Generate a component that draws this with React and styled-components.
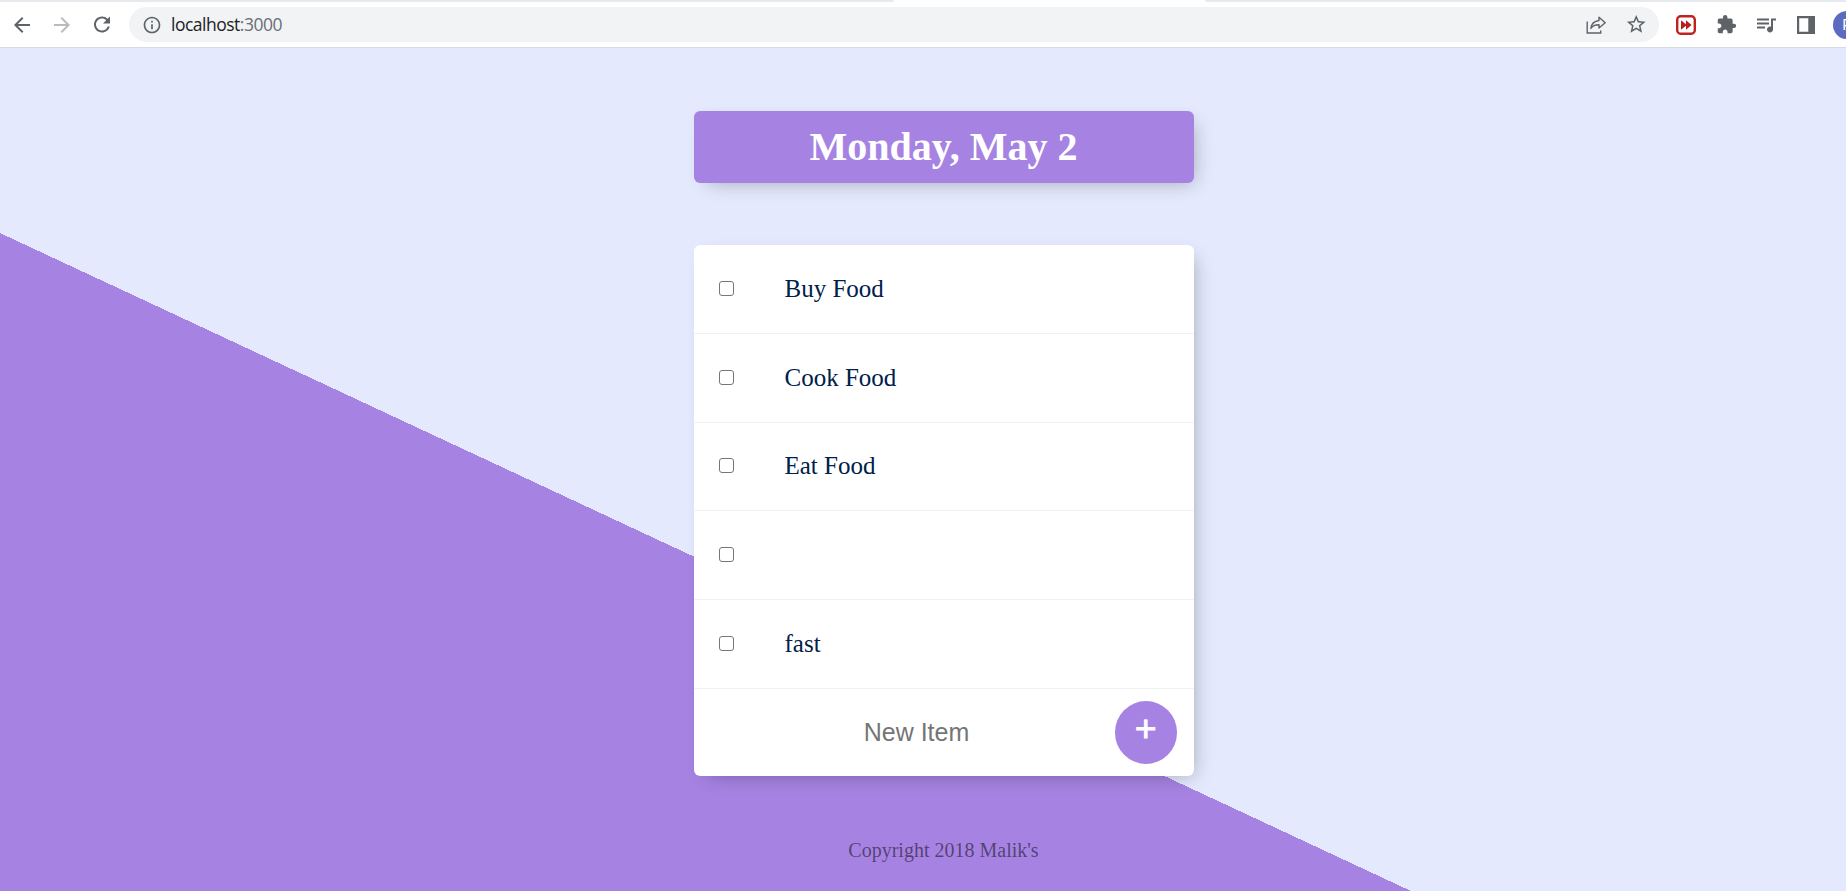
import React from "react";
import styled, { createGlobalStyle } from "styled-components";
import {
  MdArrowBack,
  MdArrowForward,
  MdRefresh,
  MdInfoOutline,
  MdStarBorder,
  MdExtension,
  MdQueueMusic,
} from "react-icons/md";

const GlobalStyle = createGlobalStyle`
  html, body { margin: 0; overflow: hidden; background: #e4e9fd; }
  *, *::before, *::after { box-sizing: border-box; }
`;

const Window = styled.div`
  width: 1887px;
  height: 891px;
  overflow: hidden;
  font-family: "Liberation Serif", "Times New Roman", serif;
`;

const TabStrip = styled.div`
  display: flex;
  justify-content: space-between;
  height: 2px;
  background: #fff;
`;

const InactiveTabs = styled.div`
  width: ${(p) => p.$width}px;
  background: #e6e9ed;
  border-radius: ${(p) => (p.$side === "left" ? "0 0 4px 0" : "0 0 0 4px")};
`;

const Toolbar = styled.header`
  display: flex;
  align-items: center;
  height: 46px;
  padding: 0 0 0 9.5px;
  background: #fff;
  border-bottom: 1px solid #d9dbde;
`;

const ToolButton = styled.span`
  display: flex;
  flex: none;
  width: 24px;
  justify-content: center;
  margin-right: ${(p) => p.$gap ?? 16}px;
  color: ${(p) => (p.$disabled ? "#b9bbbe" : "#5f6368")};
`;

const AddressBar = styled.div`
  display: flex;
  align-items: center;
  flex: none;
  width: 1530px;
  height: 35px;
  margin-right: 15px;
  padding: 0 10.5px 0 10.5px;
  border-radius: 18px;
  background: #f1f3f4;
`;

const Url = styled.span`
  flex: 1;
  margin-left: 7.5px;
  padding-bottom: 1.5px;
  font: 400 17.5px/24px "Open Sans", "Noto Sans", sans-serif;
  letter-spacing: -0.5px;
  color: #202124;
`;

const Port = styled.span`
  color: #6b6f74;
`;

const Avatar = styled.span`
  flex: none;
  width: 28px;
  height: 28px;
  border-radius: 50%;
  background: #5c6bc0;
  color: #fff;
  font: 400 15px/28px Roboto, sans-serif;
  text-align: center;
`;

const Page = styled.main`
  height: 1250px;
  padding-top: 63px;
  background-image: linear-gradient(25deg, #a683e3 50%, #e4e9fd 50%);
`;

const Box = styled.section`
  width: 500px;
  margin: 0 auto;
  border-radius: 6.25px;
  background: ${(p) => (p.$accent ? "#a683e3" : "#fff")};
  box-shadow: 6.25px 6.25px 18.75px -6.25px rgba(0, 0, 0, 0.3);
`;

const Heading = styled(Box)`
  height: 72px;
  margin-bottom: 62px;
  text-align: center;
`;

const Title = styled.h1`
  margin: 0;
  font-size: 40px;
  line-height: 46px;
  padding: 13px 0;
  color: #fff;
`;

const Item = styled.label`
  display: flex;
  align-items: center;
  height: 88.75px;
  padding-left: 25px;
  border-bottom: 1px solid #f1f1f1;
`;

const Checkbox = styled.input.attrs({ type: "checkbox" })`
  appearance: none;
  width: 15px;
  height: 15px;
  margin: 0 51px 1px 0;
  border: 1.25px solid #767676;
  border-radius: 3px;
  background: #fff;

  &:checked {
    background: #a683e3;
  }
`;

const ItemText = styled.span`
  margin-bottom: 0.9px;
  font-size: 25px;
  line-height: 29px;
  color: #00204a;
`;

const NewItem = styled.form`
  display: flex;
  align-items: center;
  height: 87.5px;
  padding: 0 16.5px 0 25px;
`;

const NewItemInput = styled.input`
  flex: 1;
  min-width: 0;
  height: 75px;
  padding: 0;
  border: 0;
  outline: 0;
  background: transparent;
  text-align: center;
  font: 400 25px "Liberation Sans", Arial, sans-serif;

  &::placeholder {
    color: #757575;
  }
`;

const AddButton = styled.button`
  flex: none;
  width: 62.5px;
  height: 63px;
  padding: 0 0 8.5px;
  border: 0;
  border-radius: 50%;
  background: #a683e3;
  color: #fff;
  font: 400 37.5px "Liberation Sans", Arial, sans-serif;
  -webkit-text-stroke: 0.8px #fff;
`;

const Footer = styled.footer`
  margin-top: 63px;
  font-size: 20px;
  line-height: 23px;
  text-align: center;
  color: rgba(0, 0, 0, 0.5);
`;

const ShareIcon = () => (
  <svg width="22" height="20" viewBox="0 0 22 20" fill="none" stroke="#5f6368" strokeWidth="1.4">
    <path d="M1.2 6.5V18H14.7V15.5" />
    <path d="M13 2.2L19.2 7.7L13 13V9.8C9.2 9.7 6.7 10.8 4.9 13.4C5.4 9.2 8 6.1 13 5.5Z" strokeLinejoin="round" />
  </svg>
);

const SkipIcon = () => (
  <svg width="20" height="20" viewBox="0 0 20 20">
    <rect x="1.2" y="1.2" width="17.6" height="17.6" rx="3.5" fill="#fff" stroke="#bd2420" strokeWidth="2.4" />
    <path d="M5 5.2L10 9.3V5.2L15.6 10L10 14.8V10.7L5 14.8Z" fill="#b5201c" />
  </svg>
);

const SidePanelIcon = () => (
  <svg width="18" height="18" viewBox="0 0 18 18">
    <path fill="#5f6368" fillRule="evenodd" d="M0 0H18V18H0ZM2.2 2.2V15.8H11.3V2.2Z" />
  </svg>
);

const items = ["Buy Food", "Cook Food", "Eat Food", "", "fast"];

export default function App() {
  return (
    <Window>
      <GlobalStyle />
      <TabStrip>
        <InactiveTabs $side="left" $width={894} />
        <InactiveTabs $side="right" $width={682} />
      </TabStrip>
      <Toolbar>
        <ToolButton><MdArrowBack size={24} /></ToolButton>
        <ToolButton $disabled><MdArrowForward size={24} /></ToolButton>
        <ToolButton $gap={15.5}><MdRefresh size={25} /></ToolButton>
        <AddressBar>
          <ToolButton $gap={0}><MdInfoOutline size={20} /></ToolButton>
          <Url>localhost<Port>:3000</Port></Url>
          <ToolButton $gap={16}><ShareIcon /></ToolButton>
          <ToolButton $gap={0}><MdStarBorder size={22.5} /></ToolButton>
        </AddressBar>
        <ToolButton><SkipIcon /></ToolButton>
        <ToolButton><MdExtension size={21} /></ToolButton>
        <ToolButton><MdQueueMusic size={25} /></ToolButton>
        <ToolButton $gap={15}><SidePanelIcon /></ToolButton>
        <Avatar>P</Avatar>
      </Toolbar>
      <Page>
        <Heading $accent>
          <Title>Monday, May 2</Title>
        </Heading>
        <Box>
          {items.map((text, i) => (
            <Item key={i}>
              <Checkbox />
              <ItemText>{text}</ItemText>
            </Item>
          ))}
          <NewItem>
            <NewItemInput placeholder="New Item" />
            <AddButton type="button">+</AddButton>
          </NewItem>
        </Box>
        <Footer>Copyright 2018 Malik's</Footer>
      </Page>
    </Window>
  );
}
